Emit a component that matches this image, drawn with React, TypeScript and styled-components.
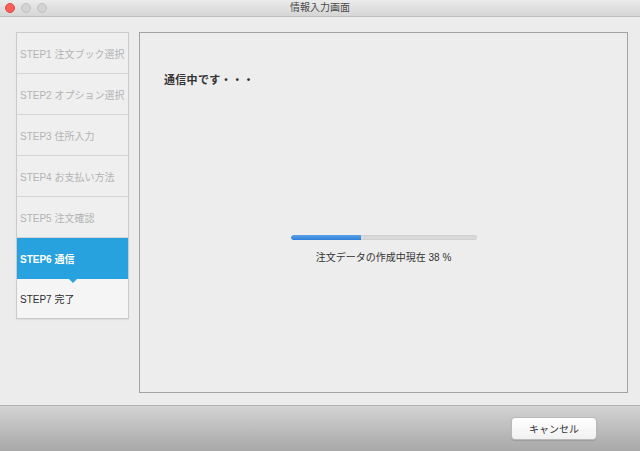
import styled, { createGlobalStyle } from 'styled-components'

const GlobalStyle = createGlobalStyle`
  html, body {
    margin: 0;
    padding: 0;
    background: #ececec;
  }

  body {
    font-family: "Liberation Sans", "Noto Sans CJK JP", sans-serif;
  }
`

const Window = styled.div`
  width: 640px;
  height: 451px;
  display: flex;
  overflow: hidden;
  background: #ececec;
  flex-direction: column;
`

const TitleBar = styled.div`
  height: 16px;
  display: flex;
  position: relative;
  flex-shrink: 0;
  background: linear-gradient(#ebebeb, #d6d6d6);
  border-bottom: 1px solid #bdbdbd;
  align-items: center;
  justify-content: center;
`

const Lights = styled.div`
  gap: 6px;
  left: 5px;
  top: 3px;
  display: flex;
  position: absolute;
`

const Light = styled.span<{ $red?: boolean }>`
  width: 10px;
  height: 10px;
  display: block;
  box-sizing: border-box;
  border-radius: 50%;
  background: ${({ $red }) => ($red ? '#fc5f57' : '#d3d3d3')};
  border: 1px solid ${({ $red }) => ($red ? '#df4744' : '#c0c0c0')};
`

const Title = styled.div`
  color: #4a4a4a;
  font-size: 10px;
  line-height: 16px;
`

const Content = styled.div`
  flex: 1;
  gap: 10px;
  display: flex;
  padding: 15px 12px 11px 16px;
  align-items: flex-start;
`

const Steps = styled.ul`
  width: 113px;
  margin: 0;
  padding: 0;
  list-style: none;
  box-sizing: border-box;
  border: 1px solid #cacaca;
  box-shadow: 0 1px 1px rgba(0, 0, 0, 0.06);
`

const Step = styled.li<{ $state: 'done' | 'active' | 'next' }>`
  height: 40px;
  display: flex;
  position: relative;
  padding-left: 3px;
  font-size: 10px;
  align-items: center;
  border-bottom: 1px solid #d4d4d4;
  color: ${({ $state }) => ($state === 'done' ? '#b3b3b3' : $state === 'active' ? '#ffffff' : '#2e2e2e')};
  background: ${({ $state }) => ($state === 'active' ? '#27a2de' : $state === 'next' ? '#f5f5f5' : '#efefef')};
  font-weight: ${({ $state }) => ($state === 'active' ? 600 : 400)};

  &:last-child {
    height: 39px;
    border-bottom: none;
  }

  ${({ $state }) => $state === 'active' && `
    border-bottom-color: #27a2de;

    &::after {
      left: 50%;
      bottom: -5px;
      content: '';
      position: absolute;
      margin-left: -5px;
      border-top: 5px solid #27a2de;
      border-left: 5px solid transparent;
      border-right: 5px solid transparent;
      z-index: 1;
    }
  `}
`

const Panel = styled.section`
  flex: 1;
  height: 361px;
  display: flex;
  box-sizing: border-box;
  background: #ededed;
  border: 1px solid #a3a3a3;
  flex-direction: column;
  padding: 38px 24px 0;
`

const Heading = styled.h2`
  margin: 0;
  color: #333333;
  font-size: 11px;
  font-weight: 700;
  letter-spacing: 0.3px;
`

const Progress = styled.div`
  gap: 9px;
  display: flex;
  margin-top: 148px;
  align-items: center;
  flex-direction: column;
`

const Track = styled.div`
  width: 186px;
  height: 5px;
  overflow: hidden;
  background: #d9d9d9;
  border-radius: 3px;
  box-shadow: inset 0 0 0 1px rgba(0, 0, 0, 0.04);
`

const Fill = styled.div`
  height: 100%;
  border-radius: 3px 0 0 3px;
  background: linear-gradient(#5aa2ea, #2f7fd8);
`

const Status = styled.div`
  color: #333333;
  font-size: 10px;
`

const Footer = styled.footer`
  height: 45px;
  display: flex;
  flex-shrink: 0;
  padding-right: 43px;
  border-top: 1px solid #b4b4b4;
  background: linear-gradient(#d3d3d3, #a8a8a8);
  align-items: flex-start;
  justify-content: flex-end;
`

const Button = styled.button`
  width: 86px;
  height: 23px;
  margin-top: 11px;
  color: #333333;
  cursor: pointer;
  font-size: 10px;
  font-family: inherit;
  border-radius: 4px;
  border: 1px solid #b9b9b9;
  background: linear-gradient(#ffffff, #f1f1f1);
  box-shadow: 0 1px 1px rgba(0, 0, 0, 0.12);
`

const steps = [
  'STEP1 注文ブック選択',
  'STEP2 オプション選択',
  'STEP3 住所入力',
  'STEP4 お支払い方法',
  'STEP5 注文確認',
  'STEP6 通信',
  'STEP7 完了'
]

const current = 5
const percent = 38

const App = () => {
  return (
    <Window>
      <GlobalStyle />

      <TitleBar>
        <Lights>
          <Light $red />
          <Light />
          <Light />
        </Lights>
        <Title>情報入力画面</Title>
      </TitleBar>

      <Content>
        <Steps>
          {steps.map((label, i) => (
            <Step
              key={label}
              $state={i < current ? 'done' : i === current ? 'active' : 'next'}
            >
              {label}
            </Step>
          ))}
        </Steps>

        <Panel>
          <Heading>通信中です・・・</Heading>

          <Progress>
            <Track>
              <Fill style={{ width: `${percent}%` }} />
            </Track>
            <Status>注文データの作成中現在 {percent} %</Status>
          </Progress>
        </Panel>
      </Content>

      <Footer>
        <Button>キャンセル</Button>
      </Footer>
    </Window>
  )
}

export default App
